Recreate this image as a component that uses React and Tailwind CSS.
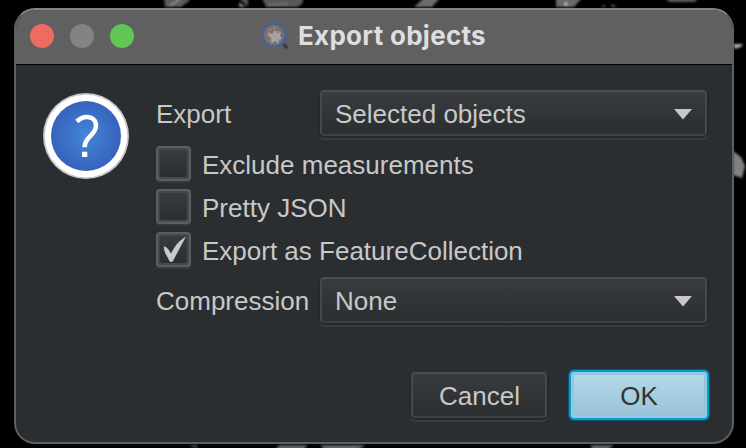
import React from "react";

function Backdrop() {
  return (
    <svg className="absolute inset-0" width="746" height="448" viewBox="0 0 746 448">
      <defs>
        <filter id="soft" x="-20%" y="-20%" width="140%" height="140%">
          <feGaussianBlur stdDeviation="0.8" />
        </filter>
      </defs>
      <g filter="url(#soft)">
        <path d="M164 -2h26l-1 3-8 6H165z" fill="#5c5c5c" />
        <path d="M170 6l10-7" stroke="#999" strokeWidth="1.5" />
        <path d="M239 -2h9v9z" fill="#555" />
        <path d="M239 2l7 5h-7z" fill="#777" />
        <path d="M262 -2h42l-2 6-5 3h-31z" fill="#595959" />
        <path d="M268 5l20-1" stroke="#707070" strokeWidth="2" />
        <path d="M424 -2h16l-8 9h-18z" fill="#6a6a6a" />
        <path d="M556 -2h26l-8 9h-18z" fill="#686868" />
        <circle cx="566" cy="4" r="2" fill="#aaa" />
        <path d="M601 7l3-2 2 2zM611 4l6 3h-5z" fill="#666" />
        <path d="M665 -2h33l-3 4h-26z" fill="#5c5c5c" />
        <path d="M733 44h10l-2 3-6 2z" fill="#a8a8a8" />
        <path d="M733 151l8 6 4 9-3 12-9-3z" fill="#818181" />
        <path d="M188 445h9v3z" fill="#555" />
        <path d="M279 445h29l-5 5h-28z" fill="#606060" />
        <path d="M320 445h46l-9 5h-32z" fill="#656565" />
        <path d="M590 445h24l-7 5h-14z" fill="#606060" />
      </g>
    </svg>
  );
}

function AppIcon() {
  return (
    <svg width="30" height="30" viewBox="0 0 30 30">
      <path d="M22 22l5.5 5" stroke="#3b3b3b" strokeWidth="3.4" />
      <circle cx="14" cy="14" r="11.8" fill="#77706e" stroke="#4b618b" strokeWidth="2.9" />
      <path d="M7 8l5-3 5 1-3 4-5 4-2-2zM17 7l4 3-1 3-3-2zM6 15l4 1 1 5-3-1z" fill="#8b6d64" />
      <path d="M8 11l4 2 3-4 2 3 4-1-1 4 2 3-4 1 1 4-4-3-4 3 1-5-3-3z" fill="#a3a3a6" />
      <path d="M9 8l2 1M14 6l1 2M19 10l-2 1M7 14l3 1M10 20l2-2M19 20l-2-3" stroke="#a09894" strokeWidth="1.3" />
    </svg>
  );
}

function QuestionIcon() {
  return (
    <svg width="86" height="86" viewBox="0 0 86 86">
      <defs>
        <radialGradient id="blue">
          <stop offset="0" stopColor="#4387d9" />
          <stop offset="1" stopColor="#3762bb" />
        </radialGradient>
      </defs>
      <circle cx="43" cy="43" r="43" fill="#c5c5c5" />
      <circle cx="43" cy="43" r="41.3" fill="#fff" />
      <circle cx="43" cy="43" r="35" fill="url(#blue)" />
      <path d="M33.8 28.5C37 25.5 40 24 43.5 24C49.5 24 53 27.5 53 32.5C53 42.5 41.6 43.5 41.6 54.3" fill="none" stroke="#fff" strokeWidth="4.6" />
      <rect x="39" y="58.7" width="5.3" height="5.3" fill="#fff" />
    </svg>
  );
}

const raised = "border-2 border-[#45494b] border-t-[#4b4f51] border-b-[#3e4244] bg-linear-to-b from-[#383c3e] to-[#2b2e30]";

function Select({ children }) {
  return (
    <div className="h-[50px] w-[391px] rounded-[7px] border-b-2 border-[#393d40] bg-[#25292b] px-[2px] pb-[2px]">
      <div className={`flex h-[46px] items-center justify-between rounded-[4px] pr-[13px] pl-[13px] ${raised}`}>
        <span className="pt-[2px]">{children}</span>
        <svg className="mt-[2px]" width="18" height="12" viewBox="0 0 18 12">
          <path d="M0 1h18l-9 10.5z" fill="#c9c7c8" />
        </svg>
      </div>
    </div>
  );
}

function Check({ checked, children }) {
  return (
    <div className="flex h-[43px] items-start">
      <div className="h-[37px] w-[35px] shrink-0 rounded-[4px] bg-[#353a3c]">
        <div className="flex size-[35px] rounded-[4px] border-2 border-[#5b5f61] bg-[#45494b] p-[2px]">
          <div className="size-full rounded-[2px] bg-linear-to-b from-[#383c3e] to-[#2a2e30]">
            {checked && (
              <svg className="block" width="27" height="27" viewBox="0 0 27 27">
                <path d="M3.7 10.5C6.5 10.5 8 12.5 11 17.5C14.5 10.5 19 4.500 25.9 0.8C21.500 8.500 17.500 16.500 13 25C12 26.200 10.500 26.200 9.500 25.3C7.500 20.500 4 17 3.7 10.5z" fill="#c9c9c9" />
              </svg>
            )}
          </div>
        </div>
      </div>
      <span className="ml-[11px] pt-[4px] leading-[30px]">{children}</span>
    </div>
  );
}

export default function App() {
  return (
    <main className="relative h-[448px] w-[746px] overflow-hidden bg-black pt-2 pl-[14px] font-['Liberation_Sans',Arial,sans-serif] text-[26px] leading-[30px] text-[#c8c8c8]">
      <Backdrop />
      <section className="relative flex h-[436px] w-[720px] flex-col overflow-hidden rounded-[21px] border-2 border-[#5d6061] border-t-[#858585] bg-[#2a2e30]">
        <header className="flex h-[55px] shrink-0 items-center border-b border-black bg-[#606060] pb-[2px] pl-[14px]">
          <div className="flex gap-4">
            <span className="size-6 rounded-full bg-[#ed6b60]" />
            <span className="size-6 rounded-full bg-[#838383]" />
            <span className="size-6 rounded-full bg-[#62c656]" />
          </div>
          <div className="ml-[126px] flex items-center">
            <AppIcon />
            <h1 className="ml-[8px] font-[Inter,sans-serif] text-[26px] font-bold leading-[30px] tracking-[0.28px] whitespace-nowrap text-[#dedede]">Export objects</h1>
          </div>
        </header>
        <div className="flex pt-[25px] pl-[27px]">
          <div className="mt-[3px] mr-[27px] h-[86px] w-[86px] shrink-0">
            <QuestionIcon />
          </div>
          <div>
            <div className="flex h-[56px] items-start">
              <label className="w-[162px] pt-[9px]">Export</label>
              <Select>Selected objects</Select>
            </div>
            <Check>Exclude measurements</Check>
            <Check>Pretty JSON</Check>
            <Check checked>Export as FeatureCollection</Check>
            <div className="mt-[2px] flex items-start">
              <label className="w-[162px] pt-[9px]">Compression</label>
              <Select>None</Select>
            </div>
          </div>
        </div>
        <footer className="mt-[41px] flex items-start gap-[20px] pl-[393px]">
          <div className="mt-[4px] h-[50px] w-[140px] rounded-[7px] border-b-2 border-[#393d40] bg-[#25292b] px-[2px] pb-[2px]">
            <button className={`block h-[46px] w-full rounded-[4px] pt-[2px] pl-[1px] ${raised}`}>Cancel</button>
          </div>
          <button className="mt-[2px] h-[50px] w-[140px] rounded-[5px] border-2 border-[#079bd0] bg-[#92cce3] p-[2px] text-[#333] shadow-[0_0_0_1px_#14536b]">
            <span className="flex size-full items-center justify-center rounded-[2px] border border-[#8ec4db] bg-linear-to-b from-[#b2d9e9] to-[#9bc3d8] pt-[2px]">OK</span>
          </button>
        </footer>
      </section>
    </main>
  );
}
